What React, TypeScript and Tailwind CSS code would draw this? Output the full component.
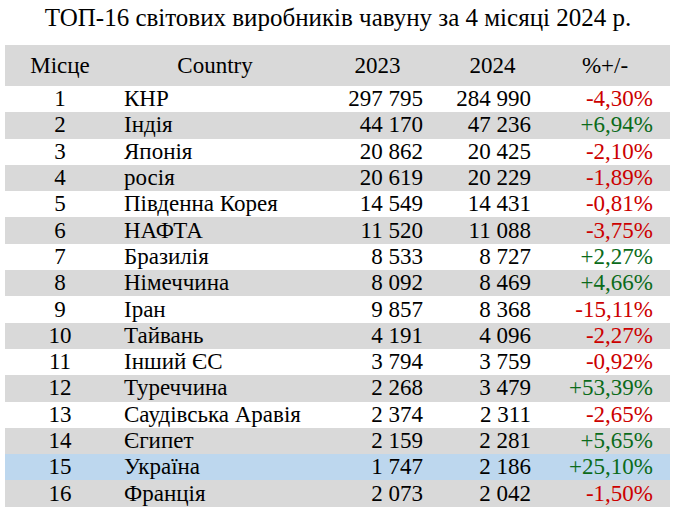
const rows = [
  { n: 1, c: 'КНР', a: '297 795', b: '284 990', p: '-4,30%' },
  { n: 2, c: 'Індія', a: '44 170', b: '47 236', p: '+6,94%' },
  { n: 3, c: 'Японія', a: '20 862', b: '20 425', p: '-2,10%' },
  { n: 4, c: 'росія', a: '20 619', b: '20 229', p: '-1,89%' },
  { n: 5, c: 'Південна Корея', a: '14 549', b: '14 431', p: '-0,81%' },
  { n: 6, c: 'НАФТА', a: '11 520', b: '11 088', p: '-3,75%' },
  { n: 7, c: 'Бразилія', a: '8 533', b: '8 727', p: '+2,27%' },
  { n: 8, c: 'Німеччина', a: '8 092', b: '8 469', p: '+4,66%' },
  { n: 9, c: 'Іран', a: '9 857', b: '8 368', p: '-15,11%' },
  { n: 10, c: 'Тайвань', a: '4 191', b: '4 096', p: '-2,27%' },
  { n: 11, c: 'Інший ЄС', a: '3 794', b: '3 759', p: '-0,92%' },
  { n: 12, c: 'Туреччина', a: '2 268', b: '3 479', p: '+53,39%' },
  { n: 13, c: 'Саудівська Аравія', a: '2 374', b: '2 311', p: '-2,65%' },
  { n: 14, c: 'Єгипет', a: '2 159', b: '2 281', p: '+5,65%' },
  { n: 15, c: 'Україна', a: '1 747', b: '2 186', p: '+25,10%' },
  { n: 16, c: 'Франція', a: '2 073', b: '2 042', p: '-1,50%' },
];

const serif = "font-['Liberation_Serif','Times_New_Roman',serif]";
const cols = 'grid grid-cols-[110px_210px_105px_110px_130px]';

export default function App() {
  return (
    <div className={`w-[676px] h-[513px] bg-white text-black ${serif} overflow-hidden`}>
      <h1 className="h-[45px] pt-[3px] text-center text-[25px] leading-[30px] font-normal">
        ТОП-16 світових виробників чавуну за 4 місяці 2024 р.
      </h1>
      <div className="ml-[5px] w-[665px] text-[23px]">
        <div className={`${cols} h-[41px] items-center bg-[#d9d9d9] pt-[2px]`}>
          <div className="text-center">Місце</div>
          <div className="text-center pr-[10px]">Country</div>
          <div className="text-center">2023</div>
          <div className="text-center pl-[15px]">2024</div>
          <div className="text-center">%+/-</div>
        </div>
        {rows.map((r) => {
          const bg = r.n === 15 ? 'bg-[#bdd7ee]' : r.n % 2 === 0 ? 'bg-[#d9d9d9]' : 'bg-white';
          const neg = r.p.startsWith('-');
          return (
            <div key={r.n} className={`${cols} h-[26.3px] items-center leading-[26px] ${bg}`}>
              <div className="text-center">{r.n}</div>
              <div className="pl-[9px] whitespace-nowrap">{r.c}</div>
              <div className="text-right pr-[7px] whitespace-pre">{r.a}</div>
              <div className="text-right pr-[9px] whitespace-pre">{r.b}</div>
              <div className={`text-right pr-[17px] ${neg ? 'text-[#cc0000]' : 'text-[#0b6b1a]'}`}>{r.p}</div>
            </div>
          );
        })}
      </div>
    </div>
  );
}
